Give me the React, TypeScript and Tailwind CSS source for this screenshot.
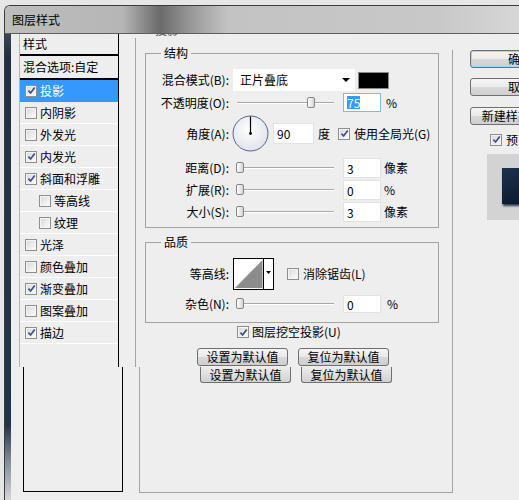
import type { ReactNode } from 'react';

const FONT = "font-['Noto_Sans_CJK_SC','Liberation_Sans',sans-serif]";

function Check({ on }: { on?: boolean }) {
  return (
    <span className="inline-flex h-[12px] w-[12px] shrink-0 items-center justify-center border border-[#8e8f8f] bg-[linear-gradient(135deg,#d6d6d6,#ffffff)] shadow-[inset_0_0_0_1px_#f4f4f4]">
      {on && (
        <svg viewBox="0 0 10 10" className="h-[9px] w-[9px]">
          <path d="M1.6 5.2 L4 7.8 L8.6 1.6" fill="none" stroke="#3d4f8e" strokeWidth="1.9" />
        </svg>
      )}
    </span>
  );
}

function Slider({ pos }: { pos: number }) {
  return (
    <div className="relative ml-[8px] h-[12px] w-[97px] shrink-0">
      <div className="absolute left-0 right-0 top-[5px] h-[2px] border-t border-[#a9a9a9] bg-white" />
      <div
        className="absolute top-0 h-[11px] w-[8px] rounded-[2px] border border-[#858585] bg-[linear-gradient(90deg,#ffffff,#d4d4d4)]"
        style={{ left: pos }}
      />
    </div>
  );
}

function Field({ value, w = 38, h = 20, ml = 9, sel }: { value: string; w?: number; h?: number; ml?: number; sel?: boolean }) {
  return (
    <div
      className={`flex shrink-0 items-center bg-white pl-[3px] text-[12px] ${sel ? 'border border-[#86b6e6]' : 'border border-[#e2e2e2]'}`}
      style={{ width: w, height: h, marginLeft: ml }}
    >
      <span className={sel ? 'bg-[#3399ff] text-white leading-[13px]' : 'leading-[13px]'}>{value}</span>
    </div>
  );
}

function Label({ children }: { children: ReactNode }) {
  return <div className="w-[83px] shrink-0 text-right text-[12px] leading-[14px]">{children}</div>;
}

function Btn({ children, w = 91, cls = '' }: { children: ReactNode; w?: number; cls?: string }) {
  return (
    <div
      className={`flex h-[18px] shrink-0 items-center justify-center rounded-[3px] border border-[#707070] bg-[linear-gradient(180deg,#f4f4f4_0%,#eaeaea_50%,#d8d8d8_51%,#cfcfcf_100%)] text-[12px] leading-[14px] ${cls}`}
      style={{ width: w }}
    >
      {children}
    </div>
  );
}

function Group({ title, h, children }: { title: string; h: number; children: ReactNode }) {
  return (
    <div className="relative w-[294px] border border-[#a3a3a3]" style={{ height: h }}>
      <span className="absolute -top-[9px] left-[15px] bg-[#eeeeee] px-[3px] text-[12px] leading-[16px]">{title}</span>
      {children}
    </div>
  );
}

const items: { name: string; on?: boolean; sub?: boolean; sel?: boolean }[] = [
  { name: '投影', on: true, sel: true },
  { name: '内阴影' },
  { name: '外发光' },
  { name: '内发光', on: true },
  { name: '斜面和浮雕', on: true },
  { name: '等高线', sub: true },
  { name: '纹理', sub: true },
  { name: '光泽' },
  { name: '颜色叠加' },
  { name: '渐变叠加', on: true },
  { name: '图案叠加' },
  { name: '描边', on: true },
];

export default function App() {
  return (
    <div className={`h-[500px] w-[519px] overflow-hidden bg-[#e6e6e6] pl-[4px] pt-[5px] text-black ${FONT}`}>
      <div className="flex h-[495px] w-[620px] flex-col overflow-hidden rounded-tl-[6px] border-l border-t border-[#3c3c3c]">
        <div className="flex h-[27px] shrink-0 items-center bg-[linear-gradient(90deg,#bdbdbd_0%,#b6b6b6_19%,#6a6a6a_25%,#989898_30%,#c3c3c3_36%,#c8c8c8_70%,#dcdcdc_88%,#c4c4c4_100%)] pl-[7px] text-[12px]">
          图层样式
        </div>
        <div className="flex flex-1 border-t border-[#5e5e5e] bg-[#eeeeee]">
          <div className="w-[6px] shrink-0 bg-[linear-gradient(180deg,#3a4656_0%,#1f2f45_5%,#22344b_84%,#7b8693_91%,#d6d6d6_100%)]" />
          <div className="flex flex-col">
            {/* upper area */}
            <div className="flex h-[333px]">
              {/* style list */}
              <div className="ml-[8px] w-[100px] border-l border-r border-l-[#b4b4b4] border-r-black">
                <div className="flex h-[20px] items-center pl-[3px] text-[12px]">样式</div>
                <div className="h-[2px] bg-black" />
                <div className="flex h-[24px] items-center border-b-2 border-black pl-[3px] text-[12px]">混合选项:自定</div>
                {items.map((it) => (
                  <div
                    key={it.name}
                    className={`flex h-[22px] items-center gap-[3px] border-b text-[12px] ${it.sel ? 'border-[#3399ff] bg-[#3399ff] text-white' : 'border-white'} ${it.sub ? 'pl-[19px]' : 'pl-[5px]'}`}
                  >
                    <Check on={it.on} />
                    <span>{it.name}</span>
                  </div>
                ))}
              </div>

              {/* main panel */}
              <div className="ml-[16px] flex w-[318px] flex-col">
                <div className="h-[4px] overflow-hidden pl-[20px]">
                  <div className="-mt-[11px] text-[12px] leading-[14px] text-[#555]">投影</div>
                </div>
                <div className="flex flex-1">
                  <div className="w-[317px] border-l border-[#a3a3a3] pl-[9px]">
                    <div className="mt-[15px]">
                      <Group title="结构" h={175}>
                        <div className="mt-[15px] flex h-[22px] items-center">
                          <Label>混合模式(B):</Label>
                          <div className="relative ml-[4px] flex h-[22px] w-[122px] items-center bg-white pl-[7px] text-[12px]">
                            正片叠底
                            <svg viewBox="0 0 8 4" className="absolute right-[5px] top-[9px] h-[4px] w-[8px]">
                              <path d="M0 0 H8 L4 4 Z" fill="#000" />
                            </svg>
                          </div>
                          <div className="ml-[3px] h-[17px] w-[31px] border border-[#8a8a8a] bg-black" />
                        </div>
                        <div className="mt-[2px] flex h-[19px] items-center">
                          <Label>不透明度(O):</Label>
                          <Slider pos={70} />
                          <Field value="75" h={19} sel />
                          <span className="ml-[5px] text-[12px]">%</span>
                        </div>
                        <div className="mt-[3px] flex h-[37px] items-center">
                          <Label>角度(A):</Label>
                          <svg viewBox="0 0 37 37" className="ml-[3px] h-[37px] w-[37px] shrink-0">
                            <defs>
                              <radialGradient id="dg" cx="0.45" cy="0.4" r="0.65">
                                <stop offset="0" stopColor="#ffffff" />
                                <stop offset="1" stopColor="#dde1ea" />
                              </radialGradient>
                            </defs>
                            <circle cx="18.5" cy="18.5" r="17.5" fill="url(#dg)" stroke="#56658a" strokeWidth="1" />
                            <line x1="18.5" y1="18.5" x2="18.5" y2="1.5" stroke="#000" strokeWidth="1.2" />
                            <circle cx="18.5" cy="18.5" r="1.4" fill="#000" />
                          </svg>
                          <Field value="90" w={41} h={21} ml={4} />
                          <span className="ml-[4px] text-[12px]">度</span>
                          <div className="ml-[8px] flex items-center">
                            <Check on />
                          </div>
                          <span className="ml-[4px] text-[12px]">使用全局光(G)</span>
                        </div>
                        {[
                          { l: '距离(D):', v: '3', u: '像素' },
                          { l: '扩展(R):', v: '0', u: '%' },
                          { l: '大小(S):', v: '3', u: '像素' },
                        ].map((r, i) => (
                          <div key={r.l} className={`flex h-[20px] items-center ${i === 0 ? 'mt-[6px]' : 'mt-[2px]'}`}>
                            <Label>{r.l}</Label>
                            <Slider pos={-1} />
                            <Field value={r.v} />
                            <span className="ml-[3px] text-[12px]">{r.u}</span>
                          </div>
                        ))}
                      </Group>
                    </div>
                    <div className="mt-[14px]">
                      <Group title="品质" h={81}>
                        <div className="mt-[15px] flex h-[32px] items-center">
                          <Label>等高线:</Label>
                          <svg viewBox="0 0 41 32" className="ml-[4px] h-[32px] w-[41px] shrink-0">
                            <rect x="0.5" y="0.5" width="40" height="31" fill="#fff" stroke="#000" />
                            <path d="M2 30 L29.5 2 L29.5 30 Z" fill="#8c8c8c" />
                            <line x1="30.5" y1="0.5" x2="30.5" y2="31.5" stroke="#000" />
                            <path d="M33 13 H38 L35.5 16 Z" fill="#000" />
                          </svg>
                          <div className="ml-[13px] flex items-center">
                            <Check />
                          </div>
                          <span className="ml-[4px] text-[12px]">消除锯齿(L)</span>
                        </div>
                        <div className="mt-[5px] flex h-[18px] items-center">
                          <Label>杂色(N):</Label>
                          <Slider pos={-1} />
                          <Field value="0" h={18} />
                          <span className="ml-[6px] text-[12px]">%</span>
                        </div>
                      </Group>
                    </div>
                    <div className="mt-[1px] flex h-[16px] items-center pl-[92px]">
                      <Check on />
                      <span className="ml-[3px] text-[12px]">图层挖空投影(U)</span>
                    </div>
                    <div className="mt-[8px] flex gap-[10px] pl-[52px]">
                      <Btn>设置为默认值</Btn>
                      <Btn>复位为默认值</Btn>
                    </div>
                  </div>
                  <div className="mt-[12px] w-[1px] bg-[#a3a3a3]" />
                </div>
              </div>

              {/* right buttons */}
              <div className="ml-[17px] flex w-[120px] flex-col">
                <Btn w={100} cls="mt-[16px] border-[#3c7fb1] shadow-[inset_0_0_0_1px_#9fd5f7]">确定</Btn>
                <Btn w={100} cls="mt-[10px]">取消</Btn>
                <Btn w={100} cls="mt-[11px]">新建样式(W)...</Btn>
                <div className="mt-[8px] flex h-[13px] items-center pl-[20px]">
                  <Check on />
                  <span className="ml-[4px] text-[12px]">预览(V)</span>
                </div>
                <div className="ml-[17px] mt-[8px] h-[66px] w-[70px] bg-[#d3d3d3] pl-[15px] pt-[14px]">
                  <div className="h-[36px] w-[40px] bg-[linear-gradient(160deg,#1b3150,#0b1526)] shadow-[1px_2px_2px_#2a3a55]" />
                </div>
              </div>
            </div>

            {/* lower glitch area */}
            <div className="flex h-[126px]">
              <div className="ml-[12px] h-[125px] w-[100px] border-b border-l border-r border-black" />
              <div className="ml-[16px] h-[126px] w-[314px] border-b border-l border-r border-[#a3a3a3] pl-[60px]">
                <div className="flex gap-[10px]">
                  <div className="flex h-[16px] w-[91px] items-center justify-center rounded-b-[3px] border-b border-l border-r border-[#707070] bg-[linear-gradient(180deg,#ececec,#d2d2d2)] text-[12px]">
                    设置为默认值
                  </div>
                  <div className="flex h-[16px] w-[91px] items-center justify-center rounded-b-[3px] border-b border-l border-r border-[#707070] bg-[linear-gradient(180deg,#ececec,#d2d2d2)] text-[12px]">
                    复位为默认值
                  </div>
                </div>
              </div>
            </div>
          </div>
        </div>
      </div>
    </div>
  );
}
